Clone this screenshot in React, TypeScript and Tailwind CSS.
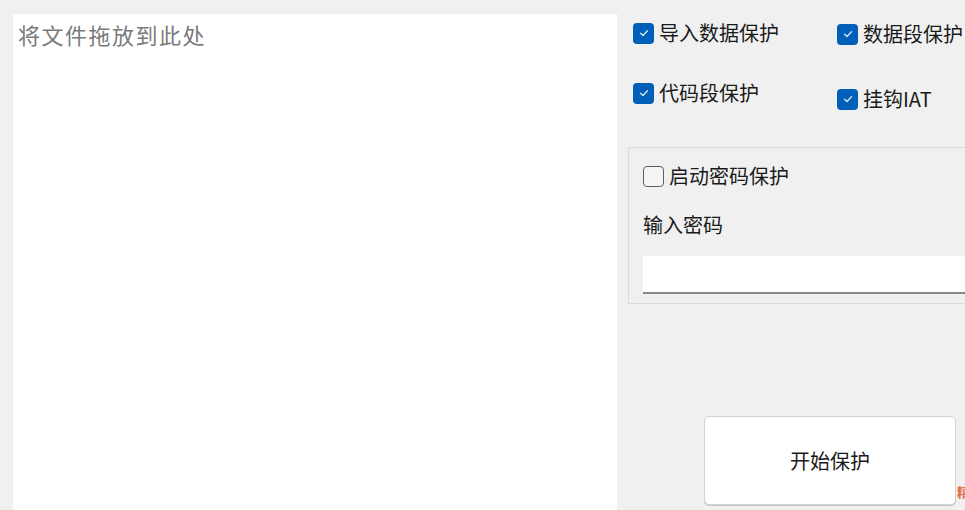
import React from "react";

const font = { fontFamily: '"Noto Sans CJK SC", "Noto Sans", sans-serif' };

function CheckBox({ checked }: { checked: boolean }) {
  if (checked) {
    return (
      <span className="flex h-[21px] w-[21px] shrink-0 items-center justify-center rounded-[4px] bg-[#005fb8]">
        <svg width="12" height="12" viewBox="0 0 12 12" fill="none">
          <path d="M2.5 6.2 L5 8.5 L9.5 3.8" stroke="#cfe3f7" strokeWidth="1.4" strokeLinecap="round" strokeLinejoin="round" />
        </svg>
      </span>
    );
  }
  return <span className="h-[21px] w-[21px] shrink-0 rounded-[4px] border-[1.5px] border-[#5f5f5f] bg-[#f5f5f5]" />;
}

function Option({ label, checked = true }: { label: string; checked?: boolean }) {
  return (
    <div className="flex items-center gap-[5px]">
      <CheckBox checked={checked} />
      <span className="text-[20px] leading-[24px] text-[#1a1a1a]">{label}</span>
    </div>
  );
}

export default function App() {
  return (
    <div className="flex h-[510px] w-[965px] overflow-hidden bg-[#f0f0f0]" style={font}>
      {/* 拖放区域 */}
      <div className="ml-[13px] mt-[14px] w-[604px] shrink-0 bg-white px-[5px] pt-[6px]">
        <span className="text-[22px] leading-[28px] tracking-[1.5px] text-[#7a7a7a]">将文件拖放到此处</span>
      </div>

      {/* 右侧选项 */}
      <div className="relative flex flex-1 flex-col pl-[11px]">
        <div className="flex pl-[5px] pt-[21px]">
          <div className="flex w-[204px] flex-col gap-[36px]">
            <Option label="导入数据保护" />
            <Option label="代码段保护" />
          </div>
          <div className="flex flex-col gap-[41px] pt-[1px]">
            <Option label="数据段保护" />
            <Option label="挂钩IAT" />
          </div>
        </div>

        <div className="mt-[36px] -mr-[20px] flex h-[157px] flex-col border border-[#dadada] pl-[14px] pt-[16px]">
          <Option label="启动密码保护" checked={false} />
          <span className="mt-[24px] text-[20px] leading-[26px] text-[#1a1a1a]">输入密码</span>
          <div className="mt-[18px] h-[38px] border-b-2 border-[#8a8a8a] bg-white" />
        </div>

        <div className="mt-[112px] ml-[76px] flex h-[89px] w-[252px] items-center justify-center rounded-[5px] border border-[#d2d2d2] bg-white shadow-[0_1px_0_#c8c8c8]">
          <span className="text-[20px] text-[#1a1a1a]">开始保护</span>
        </div>

        <span className="absolute right-[-5px] top-[484px] text-[13px] leading-[16px] font-bold text-[#e06a4a]">精</span>
      </div>
    </div>
  );
}
